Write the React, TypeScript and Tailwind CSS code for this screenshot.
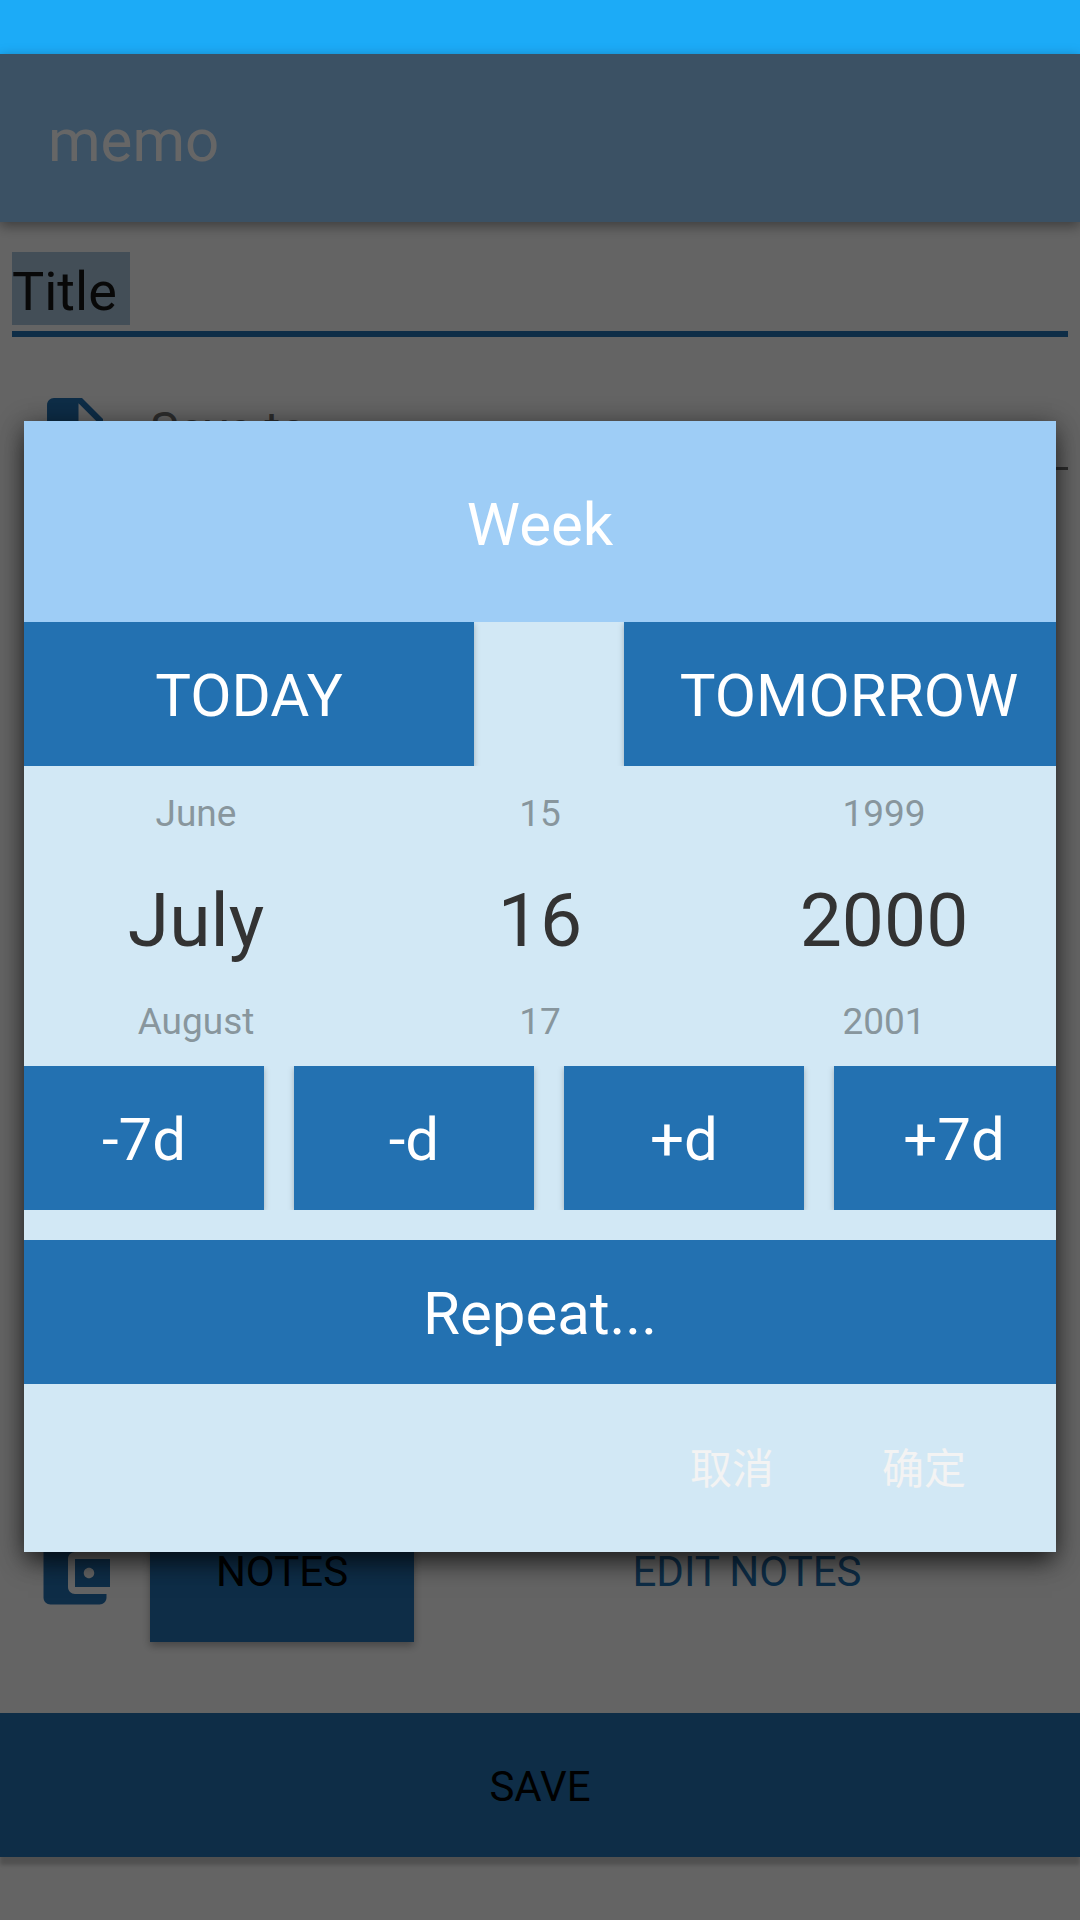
import { useState } from "react";

const MONTHS = [
  "January", "February", "March", "April", "May", "June",
  "July", "August", "September", "October", "November", "December",
];

function FileIcon() {
  return (
    <svg viewBox="0 0 24 24" className="size-[84px] fill-[#2371b1]" aria-hidden="true">
      <path d="M6 2c-1.1 0-1.99.9-1.99 2L4 20c0 1.1.89 2 1.99 2H18c1.1 0 2-.9 2-2V8l-6-6H6zm7 7V3.5L18.5 9H13z" />
    </svg>
  );
}

function WalletIcon() {
  return (
    <svg viewBox="0 0 24 24" className="size-[84px] fill-[#2371b1]" aria-hidden="true">
      <path d="M21 18v1c0 1.1-.9 2-2 2H5c-1.11 0-2-.9-2-2V5c0-1.1.89-2 2-2h14c1.1 0 2 .9 2 2v1h-9c-1.11 0-2 .9-2 2v8c0 1.1.89 2 2 2h9zm-9-2h10V8H12v8zm4-2.5c-.83 0-1.5-.67-1.5-1.5s.67-1.5 1.5-1.5 1.5.67 1.5 1.5-.67 1.5-1.5 1.5z" />
    </svg>
  );
}

type ColumnProps = {
  label: string;
  previous: string;
  value: string;
  next: string;
  onStep: (by: number) => void;
};

function PickerColumn({ label, previous, value, next, onStep }: ColumnProps) {
  return (
    <div className="flex min-w-0 flex-1 flex-col" role="group" aria-label={label}>
      <button type="button" onClick={() => onStep(-1)} className="h-24 text-[37px] leading-[96px] text-[#88969d]">
        {previous}
      </button>
      <input
        readOnly
        aria-label={label}
        value={value}
        className="h-[116px] w-full bg-transparent text-center text-[75px] leading-[116px] text-[#333333] outline-none"
      />
      <button type="button" onClick={() => onStep(1)} className="h-[88px] text-[37px] leading-[88px] text-[#88969d]">
        {next}
      </button>
    </div>
  );
}

function DateDialog() {
  const [date, setDate] = useState(new Date(2000, 6, 16));
  const y = date.getFullYear();
  const m = date.getMonth();
  const d = date.getDate();
  const shiftDays = (by: number) => setDate(new Date(y, m, d + by));
  const wide =
    "h-36 w-[450px] shrink-0 bg-[#2371b1] pt-1 text-[60px] text-white shadow-[0_2px_6px_rgba(0,0,0,0.25)]";
  const steps = [
    { label: "-7d", by: -7 },
    { label: "-d", by: -1 },
    { label: "+d", by: 1 },
    { label: "+7d", by: 7 },
  ];

  return (
    <section
      role="dialog"
      aria-modal="true"
      aria-labelledby="dialog-title"
      className="w-full bg-[#d2e8f5] shadow-[0_14px_24px_-4px_rgba(0,0,0,0.5),0_4px_24px_rgba(0,0,0,0.45)]"
    >
      <h2 id="dialog-title" className="flex h-[201px] items-center justify-center bg-[#9ecdf6] pt-1.5 text-[60px] text-white">
        Week
      </h2>
      <div className="flex justify-between gap-[150px] overflow-hidden">
        <button type="button" className={wide} onClick={() => setDate(new Date())}>
          TODAY
        </button>
        <button type="button" className={wide} onClick={() => shiftDays(1)}>
          TOMORROW
        </button>
      </div>
      <div className="flex">
        <PickerColumn
          label="Month"
          previous={MONTHS[(m + 11) % 12]}
          value={MONTHS[m]}
          next={MONTHS[(m + 1) % 12]}
          onStep={(by) => setDate(new Date(y, m + by, d))}
        />
        <PickerColumn
          label="Day"
          previous={String(new Date(y, m, d - 1).getDate())}
          value={String(d)}
          next={String(new Date(y, m, d + 1).getDate())}
          onStep={shiftDays}
        />
        <PickerColumn
          label="Year"
          previous={String(y - 1)}
          value={String(y)}
          next={String(y + 1)}
          onStep={(by) => setDate(new Date(y + by, m, d))}
        />
      </div>
      <div className="flex gap-[30px] overflow-hidden">
        {steps.map((s) => (
          <button
            key={s.label}
            type="button"
            onClick={() => shiftDays(s.by)}
            className="h-36 w-60 shrink-0 bg-[#2371b1] pt-1 text-[60px] text-white shadow-[0_2px_6px_rgba(0,0,0,0.25)]"
          >
            {s.label}
          </button>
        ))}
      </div>
      <button type="button" className="mt-[30px] block h-36 w-full bg-[#2371b1] pt-1 text-[60px] text-white">
        Repeat...
      </button>
      <div className="flex h-[168px] items-center justify-end px-9 text-[42px] text-[#f3f3f3]">
        <button type="button" className="h-36 w-48 pt-0.5">取消</button>
        <button type="button" className="h-36 w-48 pt-0.5">确定</button>
      </div>
    </section>
  );
}

export default function App() {
  return (
    <div className="relative flex min-h-screen flex-col overflow-hidden bg-[#fafafa] font-['Roboto','Noto_Sans_CJK_SC',sans-serif]">
      <div className="h-[54px] shrink-0 bg-[#1cabf7]" />
      <header className="flex h-[168px] shrink-0 items-center bg-[#94caf9] px-12 pt-1.5 shadow-[0_4px_12px_rgba(0,0,0,0.4)]">
        <h1 className="text-[60px] text-white">memo</h1>
      </header>
      <main className="flex flex-1 flex-col">
        <div className="mx-3 mt-[30px] border-b-6 border-[#2371b1] pb-[6px]">
          <input
            aria-label="Title"
            defaultValue="Title "
            className="block h-[73px] w-[118px] bg-[#a8c3da] pt-[5px] text-[54px] text-[#141414] outline-none"
          />
        </div>
        <div className="mt-[54px] flex">
          <div className="flex w-[150px] justify-center">
            <FileIcon />
          </div>
          <input
            aria-label="Save to"
            placeholder="Save to"
            className="mr-3 h-[79px] min-w-0 flex-1 border-b-3 border-[#707070] bg-transparent text-[48px] outline-none placeholder:text-[#707070]"
          />
        </div>
        <div className="mt-auto flex h-36 items-center">
          <div className="flex w-[150px] justify-center pt-1.5">
            <WalletIcon />
          </div>
          <button type="button" className="h-36 w-[264px] bg-[#2371b1] pt-0.5 text-[42px] text-black shadow-[0_4px_8px_rgba(0,0,0,0.3)]">
            NOTES
          </button>
          <div className="flex flex-1 justify-center">
            <button type="button" className="h-36 pt-0.5 text-[42px] text-[#2371b1]">
              EDIT NOTES
            </button>
          </div>
        </div>
        <button type="button" className="mt-[71px] mb-[63px] h-36 w-full bg-[#2371b1] pt-0.5 text-[42px] text-black shadow-[0_8px_4px_rgba(0,0,0,0.2)]">
          SAVE
        </button>
      </main>
      <div className="absolute inset-x-0 top-[54px] bottom-0 flex items-center overflow-hidden bg-black/60 px-6 pb-px">
        <DateDialog />
      </div>
    </div>
  );
}
